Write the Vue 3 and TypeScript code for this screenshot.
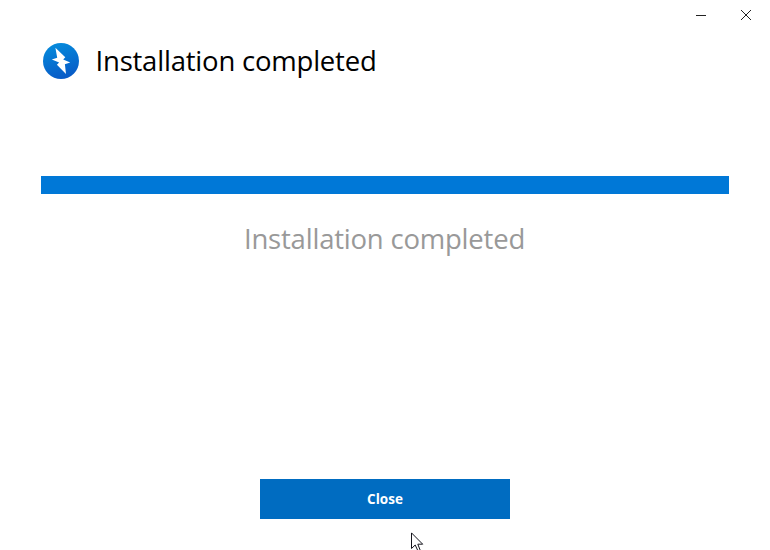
<script setup lang="ts">
const status: string = 'Installation completed'
</script>

<template>
  <main class="window">
    <header class="titlebar">
      <button class="control" aria-label="Minimize">
        <svg width="12" height="12" viewBox="0 0 12 12"><path d="M1 6.5H11" /></svg>
      </button>
      <button class="control" aria-label="Close window">
        <svg width="12" height="12" viewBox="0 0 12 12"><path d="M1 1L11 11M11 1L1 11" /></svg>
      </button>
    </header>
    <section class="heading">
      <svg class="logo" width="38" height="38" viewBox="0 0 38 38">
        <defs>
          <linearGradient id="logo-fill" x1=".3" y1="0" x2=".6" y2="1">
            <stop offset="0" stop-color="#058bdc" />
            <stop offset="1" stop-color="#0859c6" />
          </linearGradient>
        </defs>
        <circle cx="19" cy="19" r="18" fill="url(#logo-fill)" />
        <path d="M13.4 5.7L23.3 15.2L21.2 17.6L28.2 20.6L22.9 22.3L24 32L14.9 22.8L17.1 20.4L9.8 17.6L15.2 15.7Z" fill="#fff" />
      </svg>
      <h1 class="title">{{ status }}</h1>
    </section>
    <div class="progress" role="progressbar" aria-valuenow="100"></div>
    <p class="status">{{ status }}</p>
    <button class="close">Close</button>
    <svg class="cursor" width="13" height="20" viewBox="0 0 13 20">
      <path d="M.5.9V16.5L4.2 13L7 19H9.5L6.8 12.2H11.7Z" fill="#fff" stroke="#15151d" />
    </svg>
  </main>
</template>

<style>
body { margin: 0; overflow: hidden; background: #fff; }
</style>
<style scoped>
.window { box-sizing: border-box; position: relative; width: 770px; height: 550px; overflow: hidden; display: flex; flex-direction: column; align-items: center; background: #fff; font-family: "Open Sans", "Noto Sans", sans-serif; }
.titlebar { box-sizing: border-box; width: 100%; height: 30px; padding-right: 2px; display: flex; justify-content: flex-end; flex: none; }
.control { width: 45px; height: 30px; padding: 0; border: 0; background: none; display: flex; align-items: center; justify-content: center; }
.control svg { fill: none; stroke: #222; stroke-width: 1; }
.heading { width: 686px; height: 62px; display: flex; align-items: center; gap: 15.5px; }
.title, .status { margin: 0; font-size: 27.5px; font-weight: 400; line-height: 38px; letter-spacing: -.21px; white-space: nowrap; }
.progress { width: 688px; height: 18px; margin-top: 84px; background: #0078d7; flex: none; }
.status { margin-top: 26px; padding-right: 1px; color: #999; }
.close { width: 250px; height: 40px; margin-top: 221px; padding: 0; border: 0; background: #006cc1; color: #fff; font: 700 13.5px "Open Sans", sans-serif; flex: none; }
.cursor { position: absolute; left: 411px; top: 532px; }
</style>
